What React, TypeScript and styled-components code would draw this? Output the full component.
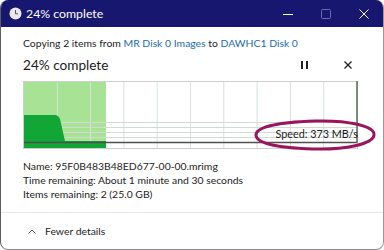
import * as React from 'react';
import styled, { createGlobalStyle } from 'styled-components';

const GlobalStyle = createGlobalStyle`
	html, body {
		margin: 0;
		padding: 0;
		background: #ffffff;
	}
	body {
		font-family: Lato, 'Open Sans', sans-serif;
		color: #1b1b1b;
	}
`;

const Window = styled.div`
	width: 384px;
	height: 250px;
	box-sizing: border-box;
	border-left: 1px solid #5e5e5e;
	border-right: 1px solid #9a9a9a;
	border-bottom: 1px solid #8a8a8a;
	border-radius: 8px;
	overflow: hidden;
	display: flex;
	flex-direction: column;
	background: #ffffff;
`;

const TitleBar = styled.div`
	height: 27px;
	flex: none;
	display: flex;
	align-items: center;
	background: #17176f;
	color: #ffffff;
	padding-left: 8px;
`;

const TitleText = styled.span`
	font-size: 12.3px;
	margin-left: 4px;
	flex: 1;
`;

const Caption = styled.div<{ $disabled?: boolean }>`
	width: 38px;
	height: 27px;
	display: flex;
	align-items: center;
	justify-content: center;
	color: ${p => (p.$disabled ? '#6b6ba8' : '#ffffff')};
`;

const Body = styled.div`
	flex: 1;
	display: flex;
	flex-direction: column;
	padding: 9px 0 0 22px;
`;

const Line = styled.div`
	font-size: 10.4px;
	line-height: 14px;
	white-space: nowrap;
`;

const Link = styled.span`
	color: #1a6bb0;
`;

const HeadRow = styled.div`
	display: flex;
	align-items: center;
	margin-top: 5px;
	height: 20px;
	padding-right: 14px;
`;

const Headline = styled.div`
	font-size: 13.6px;
	flex: 1;
`;

const HeadButton = styled.div`
	width: 43px;
	display: flex;
	justify-content: center;
	align-items: center;
`;

const ChartWrap = styled.div`
	position: relative;
	margin-top: 6px;
	width: 335px;
	height: 68px;
`;

const SpeedLabel = styled.div`
	position: absolute;
	right: 0;
	top: 46px;
	font-size: 10.8px;
	line-height: 14px;
`;

const Annotation = styled.svg`
	position: absolute;
	left: 230px;
	top: 37px;
	overflow: visible;
`;

const Details = styled.div`
	margin-top: 10px;
	display: flex;
	flex-direction: column;
`;

const Footer = styled.div`
	margin-top: auto;
	border-top: 1px solid #e6e6e6;
	height: 36px;
	display: flex;
	align-items: center;
	padding-left: 27px;
	gap: 9px;
	font-size: 10.4px;
`;

const Clock = () => (
	<svg width="13" height="13" viewBox="0 0 13 13">
		<circle cx="6.5" cy="6.5" r="6" fill="#e8e8ee" />
		<path d="M6.5 3 V6.8 H9" stroke="#555" strokeWidth="1" fill="none" />
	</svg>
);

const Chart = () => {
	const w = 335;
	const h = 68;
	const cols = Array.from({ length: 9 }, (_, i) => 1 + ((i + 1) * (w - 2)) / 10);
	return (
		<svg width={w} height={h}>
			<rect x="0.5" y="0.5" width={w - 1} height={h - 1} fill="#ffffff" stroke="#cfcfcf" />
			<rect x="1" y="1" width="82" height={h - 2} fill="#a8e294" />
			{cols.map(x => (
				<line key={x} x1={x} x2={x} y1="1" y2={h - 1} stroke="#d6e2da" />
			))}
			{[41.5, 46.5, 51.5, 56.5].map(y => (
				<line key={y} x1="1" x2={w - 1} y1={y} y2={y} stroke="#d2dad4" />
			))}
			<path d="M1 34 L32 34 Q35 34 37 38 L42 60 L83 60 L83 67 L1 67 Z" fill="#12a637" />
			<line x1="1" x2={w - 1} y1="61.5" y2="61.5" stroke="#4f4f4f" strokeWidth="1.5" />
			<line x1={w - 1} x2={w - 1} y1="0" y2="62" stroke="#5d6b5d" strokeWidth="1.5" />
		</svg>
	);
};

export default function App() {
	return (
		<>
			<GlobalStyle />
			<Window>
				<TitleBar>
					<Clock />
					<TitleText>24% complete</TitleText>
					<Caption>
						<svg width="10" height="10" viewBox="0 0 10 10">
							<line x1="0" x2="10" y1="5.5" y2="5.5" stroke="currentColor" />
						</svg>
					</Caption>
					<Caption $disabled>
						<svg width="10" height="10" viewBox="0 0 10 10">
							<rect x="0.5" y="0.5" width="9" height="9" rx="1" fill="none" stroke="currentColor" />
						</svg>
					</Caption>
					<Caption>
						<svg width="10" height="10" viewBox="0 0 10 10">
							<path d="M0.5 0.5 L9.5 9.5 M9.5 0.5 L0.5 9.5" stroke="currentColor" />
						</svg>
					</Caption>
				</TitleBar>
				<Body>
					<Line>
						Copying 2 items from <Link>MR Disk 0 Images</Link> to <Link>DAWHC1 Disk 0</Link>
					</Line>
					<HeadRow>
						<Headline>24% complete</Headline>
						<HeadButton>
							<svg width="7" height="8" viewBox="0 0 7 8">
								<rect x="0" y="0" width="2" height="8" fill="#222" />
								<rect x="5" y="0" width="2" height="8" fill="#222" />
							</svg>
						</HeadButton>
						<HeadButton>
							<svg width="8" height="8" viewBox="0 0 8 8">
								<path d="M0.5 0.5 L7.5 7.5 M7.5 0.5 L0.5 7.5" stroke="#222" strokeWidth="1.3" />
							</svg>
						</HeadButton>
					</HeadRow>
					<ChartWrap>
						<Chart />
						<SpeedLabel>Speed: 373 MB/s</SpeedLabel>
						<Annotation width="124" height="34" viewBox="0 0 124 34">
							<path
								d="M62 3 C95 2 122 8 121 17 C120 26 92 32 60 31 C28 30 3 26 3 17 C3 8 30 4 62 3 Z"
								fill="none"
								stroke="#9b145e"
								strokeWidth="3"
							/>
						</Annotation>
					</ChartWrap>
					<Details>
						<Line>Name: 95F0B483B48ED677-00-00.mrimg</Line>
						<Line>Time remaining: About 1 minute and 30 seconds</Line>
						<Line>Items remaining: 2 (25.0 GB)</Line>
					</Details>
				</Body>
				<Footer>
					<svg width="8" height="5" viewBox="0 0 8 5">
						<path d="M0.5 4.5 L4 1 L7.5 4.5" stroke="#555" fill="none" />
					</svg>
					<span>Fewer details</span>
				</Footer>
			</Window>
		</>
	);
}
